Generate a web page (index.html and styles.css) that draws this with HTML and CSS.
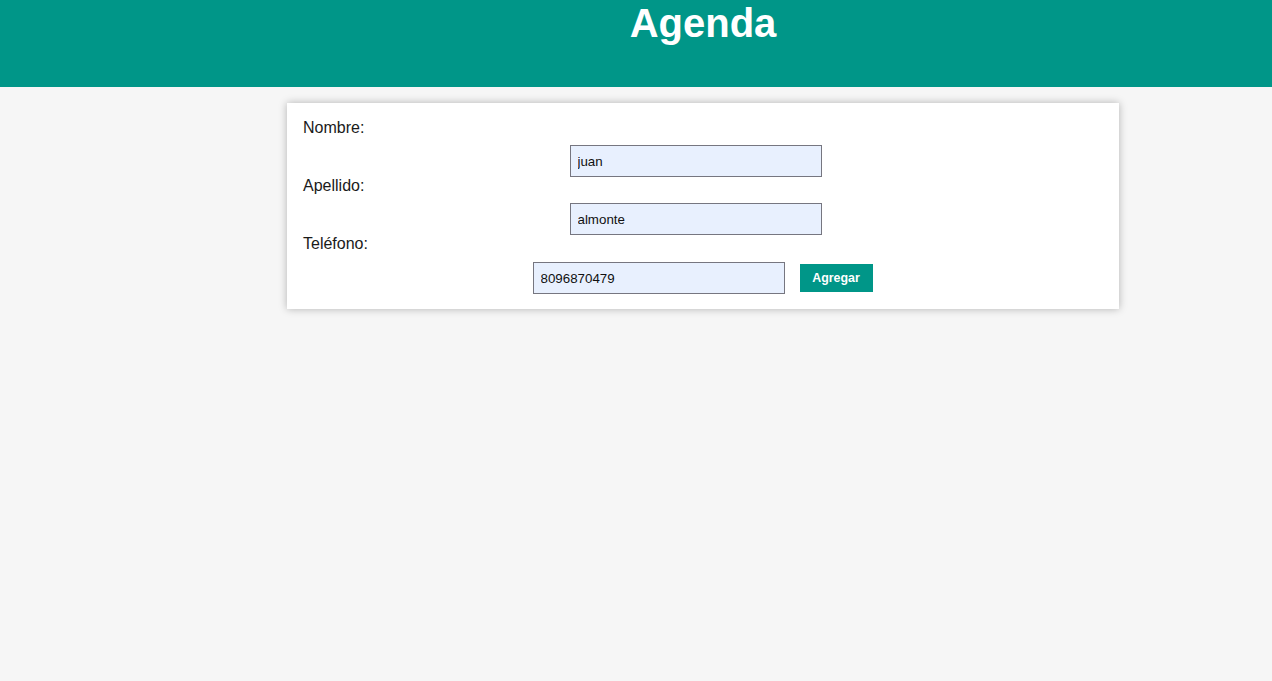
FILE: index.html
```html
<!DOCTYPE html>
<html lang="es">
<head>
<meta charset="utf-8">
<title>Agenda</title>
<link rel="stylesheet" href="styles.css">
</head>
<body>
<header class="top">
  <div class="wrap">
    <h1 class="title">Agenda</h1>
  </div>
</header>
<main class="wrap">
  <form class="card">
    <label class="lbl">Nombre:</label>
    <div class="row"><input class="field" type="text" value="juan"></div>
    <label class="lbl">Apellido:</label>
    <div class="row"><input class="field" type="text" value="almonte"></div>
    <label class="lbl">Teléfono:</label>
    <div class="row row-last"><input class="field" type="text" value="8096870479"><button class="btn" type="button">Agregar</button></div>
  </form>
</main>
</body>
</html>
```
FILE: styles.css
```css
html, body {
  margin: 0;
  padding: 0;
}
body {
  background: #f6f6f6;
  font-family: "Liberation Sans", Arial, sans-serif;
  color: #1a1a1a;
  height: 681px;
}
.top {
  background: #009688;
  height: 87px;
}
.wrap {
  width: 832px;
  margin-left: 287px;
}
.title {
  margin: 0;
  color: #fff;
  font-size: 40px;
  font-weight: bold;
  text-align: center;
  line-height: 46px;
}
.card {
  margin-top: 16px;
  background: #fff;
  box-shadow: 0 0 8px rgba(0, 0, 0, 0.28);
  padding: 16px 16px 15px;
}
.lbl {
  display: block;
  font-size: 16px;
  line-height: 18px;
  margin-bottom: 8px;
}
.row {
  display: flex;
  justify-content: center;
  align-items: center;
}
.row-last {
  padding-top: 1px;
  padding-right: 1px;
}
.field {
  box-sizing: border-box;
  width: 252px;
  height: 32px;
  margin: 0 15px 0 0;
  border: 1px solid #767680;
  background: #e8f0fe;
  padding: 0 7px;
  font-family: "Liberation Sans", Arial, sans-serif;
  font-size: 13.33px;
  color: #111;
  outline: none;
}
.btn {
  box-sizing: border-box;
  width: 73px;
  height: 28px;
  border: none;
  background: #009688;
  color: #fff;
  font-family: "Liberation Sans", Arial, sans-serif;
  font-size: 12.4px;
  font-weight: bold;
  padding: 0;
}
```
